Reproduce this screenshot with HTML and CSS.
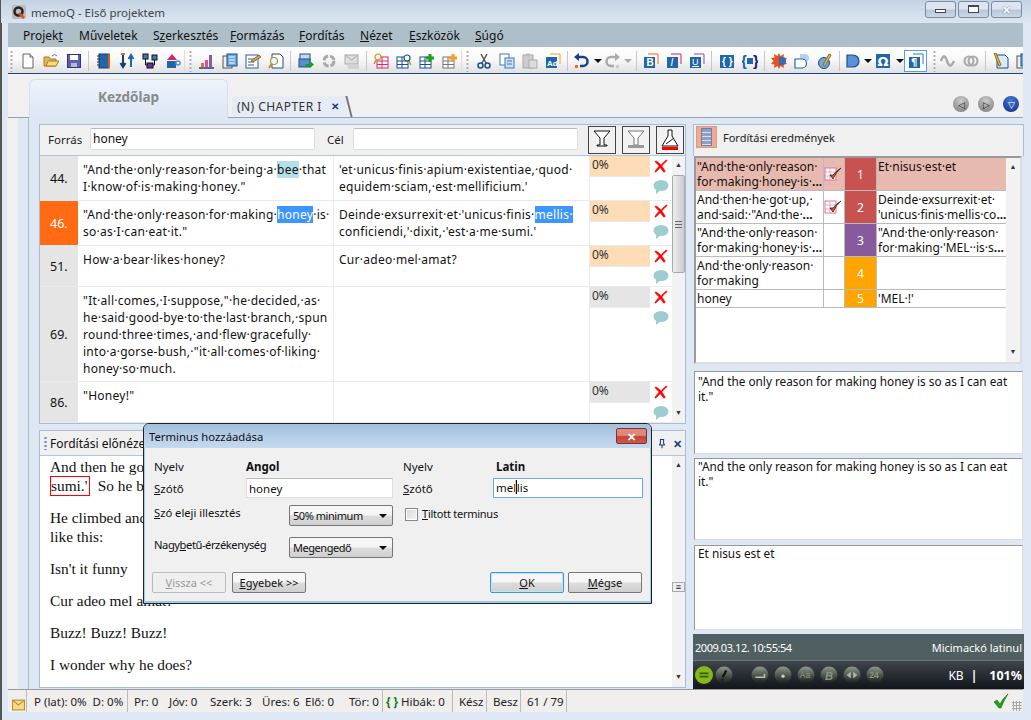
FILE: index.html
```html
<!DOCTYPE html>
<html lang="hu">
<head>
<meta charset="utf-8">
<title>memoQ - Első projektem</title>
<link rel="stylesheet" href="styles.css">
</head>
<body>
<svg class="defs" width="0" height="0">
  <defs>
    <linearGradient id="ringfill" x1="0" y1="0" x2="0" y2="1"><stop offset="0" stop-color="#8d988c"/><stop offset=".55" stop-color="#4a5248"/><stop offset="1" stop-color="#1a1e18"/></linearGradient>
    <symbol id="doc" viewBox="0 0 16 16"><path d="M3 1h7l3 3v11H3z" fill="#fff" stroke="#666"/><path d="M10 1v3h3" fill="#ddd" stroke="#666"/></symbol>
    <symbol id="open" viewBox="0 0 16 16"><path d="M1 13V4h5l1 2h6v7z" fill="#e8b850" stroke="#a87a20"/><path d="M3 13l2-5h11l-3 5z" fill="#fbdc85" stroke="#a87a20"/><path d="M9 3q3-3 5 0" fill="none" stroke="#5a7aa0"/></symbol>
    <symbol id="save" viewBox="0 0 16 16"><rect x="1.500" y="1.500" width="13" height="13" fill="#5a60b5" stroke="#2d3380"/><rect x="4" y="2" width="8" height="5" fill="#fff"/><rect x="5" y="10" width="6" height="4" fill="#bbb"/></symbol>
    <symbol id="book" viewBox="0 0 16 16"><rect x="3" y="1" width="10" height="14" fill="#1f67a8" stroke="#0d3f78"/><path d="M1 3h3M1 6h3M1 9h3M1 12h3" stroke="#333"/><path d="M12 1h2v14h-2" fill="#e05a1e"/></symbol>
    <symbol id="updown" viewBox="0 0 16 16"><path d="M4 2v11M1.500 10L4 14l2.500-4" fill="none" stroke="#0d3f78" stroke-width="2"/><path d="M12 14V3M9.500 6L12 2l2.500 4" fill="none" stroke="#1f67a8" stroke-width="2"/><path d="M2 1h4" stroke="#ef6b1f" stroke-width="2"/></symbol>
    <symbol id="tree" viewBox="0 0 16 16"><rect x="1" y="1" width="5" height="5" fill="#3a78c0" stroke="#111"/><rect x="10" y="2" width="5" height="5" fill="#3a78c0" stroke="#111"/><rect x="5" y="10" width="6" height="5" fill="#6a2ca0" stroke="#111"/><path d="M3.500 6v6H5M12.500 7v5H11" fill="none" stroke="#111"/></symbol>
    <symbol id="house" viewBox="0 0 16 16"><path d="M2 7l5-6 5 6z" fill="#d4246e"/><rect x="2" y="8" width="9" height="7" fill="#1f67a8"/><circle cx="13" cy="10" r="2" fill="none" stroke="#5a90c8" stroke-width="1.500"/></symbol>
    <symbol id="bars" viewBox="0 0 16 16"><rect x="2" y="10" width="3" height="4" fill="#ef6b1f"/><rect x="6" y="7" width="3" height="7" fill="#e0509a"/><rect x="10" y="2" width="3" height="12" fill="#8d5aa8"/><path d="M0 15h15" stroke="#1a3f80" stroke-width="1.500"/></symbol>
    <symbol id="pages" viewBox="0 0 16 16"><rect x="1" y="3" width="9" height="12" fill="#eee" stroke="#555"/><rect x="5" y="1" width="10" height="12" fill="#6fa6dc" stroke="#1a4f90"/><path d="M7 4h6M7 7h6M7 10h6" stroke="#fff"/></symbol>
    <symbol id="docpen" viewBox="0 0 16 16"><rect x="1" y="2" width="12" height="13" fill="#fff" stroke="#2c5f98"/><path d="M3 6h6M3 9h6M3 12h6" stroke="#2c5f98"/><path d="M6 8l8-6 2 2-8 5z" fill="#c8a850" stroke="#8a7030"/></symbol>
    <symbol id="docfind" viewBox="0 0 16 16"><path d="M4 1h8l3 3v11H4z" fill="#fff" stroke="#1a4f90"/><circle cx="6" cy="8" r="3.500" fill="#dff" stroke="#b89030" stroke-width="1.200"/><path d="M3.500 11L1 15" stroke="#b89030" stroke-width="2"/></symbol>
    <symbol id="print" viewBox="0 0 16 16"><rect x="2" y="1" width="10" height="6" fill="#c8d8ea" stroke="#1a4f90"/><rect x="1" y="6" width="11" height="8" fill="#5a90c8" stroke="#1a4f90"/><path d="M7 11h5V8l4 3.500L12 15v-2H7z" fill="#1ea01e"/></symbol>
    <symbol id="sync" viewBox="0 0 16 16"><circle cx="8" cy="8" r="5" fill="none" stroke="#aaa" stroke-width="3" stroke-dasharray="6 2"/><circle cx="8" cy="8" r="2" fill="#eee"/></symbol>
    <symbol id="mailg" viewBox="0 0 16 16"><rect x="1" y="2" width="13" height="9" fill="#ddd" stroke="#aaa"/><path d="M1 2l6.500 5L14 2" fill="none" stroke="#aaa"/><path d="M3 13h12M4 15h11" stroke="#bbb"/></symbol>
    <symbol id="gridp" viewBox="0 0 16 16"><rect x="4" y="4" width="11" height="11" fill="#fff" stroke="#e0246e"/><path d="M4 8h11M4 11.500h11M9 4v11" stroke="#e0246e"/><circle cx="5" cy="4" r="3" fill="#fff" stroke="#c89020" stroke-width="1.200"/><path d="M3 7l-2 4" stroke="#c89020" stroke-width="1.500"/></symbol>
    <symbol id="gridb" viewBox="0 0 16 16"><rect x="1" y="4" width="11" height="11" fill="#fff" stroke="#1a4f90"/><path d="M1 8h11M1 11.500h11M6 4v11" stroke="#1a4f90"/><circle cx="11" cy="5" r="3" fill="#fff" stroke="#1a4f90" stroke-width="1.200"/><path d="M13 8l2 4" stroke="#c89020" stroke-width="1.500"/></symbol>
    <symbol id="gridg" viewBox="0 0 16 16"><rect x="1" y="4" width="11" height="11" fill="#fff" stroke="#1a4f90"/><path d="M1 8h11M1 11.500h11M6 4v11" stroke="#1a4f90"/><path d="M11 1v8M7 5h8" stroke="#1ea01e" stroke-width="3"/></symbol>
    <symbol id="grido" viewBox="0 0 16 16"><rect x="1" y="4" width="11" height="11" fill="#fff" stroke="#777"/><path d="M1 8h11M1 11.500h11M6 4v11" stroke="#777"/><path d="M11 1v8M7 5h8" stroke="#f0a030" stroke-width="3"/></symbol>
    <symbol id="cut" viewBox="0 0 16 16"><path d="M5 1l5 9M11 1l-5 9" stroke="#555" stroke-width="1.500"/><circle cx="4.500" cy="12.500" r="2.500" fill="none" stroke="#1a4f90" stroke-width="1.500"/><circle cx="11.500" cy="12.500" r="2.500" fill="none" stroke="#1a4f90" stroke-width="1.500"/></symbol>
    <symbol id="copy" viewBox="0 0 16 16"><rect x="1" y="1" width="9" height="11" fill="#fff" stroke="#3a78c0"/><rect x="6" y="5" width="9" height="10" fill="#cfe0f4" stroke="#3a78c0"/><path d="M8 8h5M8 11h5" stroke="#3a78c0"/></symbol>
    <symbol id="paste" viewBox="0 0 16 16"><rect x="1" y="2" width="10" height="13" fill="#ccc" stroke="#aaa"/><rect x="4" y="0.500" width="4" height="3" fill="#bbb"/><rect x="7" y="7" width="8" height="8" fill="#ddd" stroke="#aaa"/></symbol>
    <symbol id="ad" viewBox="0 0 16 16"><rect x="1" y="4" width="11" height="11" fill="#1f67a8"/><path d="M5 1h10v10" fill="none" stroke="#f0a030"/><text x="2" y="13" font-size="8" font-weight="700" fill="#fff" font-family="Liberation Sans">Ad</text></symbol>
    <symbol id="undo" viewBox="0 0 16 16"><path d="M4 4h6a4 4 0 0 1 0 9H7" fill="none" stroke="#1a3f90" stroke-width="2.500"/><path d="M6 0L1 4l5 4z" fill="#1a3f90"/><rect x="2" y="12" width="3" height="3" fill="#ef6b1f"/></symbol>
    <symbol id="redo" viewBox="0 0 16 16"><path d="M12 4H6a4 4 0 0 0 0 9h3" fill="none" stroke="#aaa" stroke-width="2.500"/><path d="M10 0l5 4-5 4z" fill="#aaa"/><rect x="11" y="12" width="3" height="3" fill="#ccc"/></symbol>
    <symbol id="bold" viewBox="0 0 16 16"><rect x="1" y="4" width="11" height="11" fill="#1f67a8"/><path d="M5 1h10v10" fill="none" stroke="#ef6b1f"/><text x="3.500" y="13" font-size="10" font-weight="700" fill="#fff" font-family="Liberation Sans">B</text></symbol>
    <symbol id="ital" viewBox="0 0 16 16"><rect x="1" y="4" width="11" height="11" fill="#1f67a8"/><path d="M5 1h10v10" fill="none" stroke="#c0246e"/><text x="4.500" y="13" font-size="10" font-style="italic" fill="#fff" font-family="Liberation Sans">I</text></symbol>
    <symbol id="und" viewBox="0 0 16 16"><rect x="1" y="4" width="11" height="11" fill="#1f67a8"/><path d="M5 1h10v10" fill="none" stroke="#8d4aa8"/><text x="3" y="12" font-size="9" fill="#fff" font-family="Liberation Sans">U</text><path d="M3 13.500h7" stroke="#fff"/></symbol>
    <symbol id="brace" viewBox="0 0 16 16"><rect x="1" y="2" width="14" height="13" fill="#1f67a8"/><text x="3" y="12" font-size="10" font-weight="700" fill="#fff" font-family="Liberation Sans">{ }</text></symbol>
    <symbol id="bracesq" viewBox="0 0 16 16"><text x="-1" y="13" font-size="15" font-weight="700" fill="#1a5fa8" font-family="Liberation Sans">{</text><text x="11" y="13" font-size="15" font-weight="700" fill="#141a78" font-family="Liberation Sans">}</text><rect x="5" y="5" width="6" height="6" fill="#1f67a8"/></symbol>
    <symbol id="burst" viewBox="0 0 16 16"><path d="M8 0l1.500 3L13 1l-.5 3.500L16 5l-2.500 3L16 11l-3.500.500L13 15l-3.500-2L8 16l-1.500-3L3 15l.5-3.500L0 11l2.500-3L0 5l3.500-.5L3 1l3.500 2z" fill="#e8501e"/><path d="M8 4h3a4 4 0 0 1 0 8H8z" fill="#2c6fb8"/></symbol>
    <symbol id="dshape" viewBox="0 0 16 16"><path d="M6 1h5a4 4 0 0 1 4 4 4 4 0 0 1-4 4H6z" fill="#b8d0ea"/><path d="M1 6h7a4 4 0 0 1 0 9H1z" fill="#fff" stroke="#1f67a8" stroke-width="1.200"/></symbol>
    <symbol id="pencil" viewBox="0 0 16 16"><circle cx="7" cy="10" r="5.500" fill="#6fa6dc" stroke="#1a4f90"/><path d="M6 12L12 1l2 1-6 11z" fill="#e8b850" stroke="#8a6a20"/></symbol>
    <symbol id="dblue" viewBox="0 0 16 16"><path d="M2 2h6a6 6 0 0 1 0 12H2z" fill="#5a90d8" stroke="#1a4f90" stroke-width="1.200"/></symbol>
    <symbol id="omega" viewBox="0 0 16 16"><rect x="1" y="1" width="14" height="14" fill="#1f67a8"/><text x="2.500" y="13" font-size="13" font-weight="700" fill="#fff" font-family="DejaVu Sans">Ω</text></symbol>
    <symbol id="para" viewBox="0 0 16 16"><rect x="1" y="4" width="11" height="11" fill="#1f67a8"/><path d="M5 1h10v10" fill="none" stroke="#3a78c0"/><text x="3" y="13" font-size="10" font-weight="700" fill="#fff" font-family="DejaVu Sans">¶</text></symbol>
    <symbol id="wave" viewBox="0 0 16 16"><path d="M1 8q3-9 6 0t7 0" fill="none" stroke="#aaa" stroke-width="2.500"/></symbol>
    <symbol id="links" viewBox="0 0 16 16"><circle cx="6" cy="8" r="4.500" fill="none" stroke="#aaa" stroke-width="2.200"/><circle cx="10" cy="8" r="4.500" fill="none" stroke="#aaa" stroke-width="2.200"/></symbol>
    <symbol id="notepen" viewBox="0 0 16 16"><path d="M4 2h8l3 3v10H4z" fill="#dbe8f6" stroke="#1a4f90"/><path d="M1 0l2 0 5 12-2 1z" fill="#e8c040" stroke="#8a6a20"/></symbol>
    <symbol id="cross" viewBox="0 0 16 16"><path d="M2 2q5 3 6 5 2-3 6-6 1 0 1 1-4 3-6 6 2 3 4 6-1 1-2 1-2-3-4-5-3 3-5 5-1 0-1-1 3-4 5-6-3-3-5-5z" fill="#f00" stroke="#f00" stroke-width=".6"/></symbol>
    <symbol id="bubble" viewBox="0 0 16 16"><ellipse cx="8" cy="6.500" rx="7.500" ry="5.500" fill="#9ecdd0"/><path d="M3 10v5l5-4z" fill="#9ecdd0"/></symbol>
    <symbol id="tick" viewBox="0 0 20 16"><rect x="1" y="2" width="11" height="12" fill="#fff" stroke="#e0709a"/><path d="M1 6h11M1 10h11M6 2v12" stroke="#e8a0c0"/><path d="M6 9l3 4q3-7 8-11-5 3-8 7z" fill="#d85a10" stroke="#222" stroke-width=".8"/></symbol>
    <symbol id="ring" viewBox="0 0 16 16"><circle cx="8" cy="8" r="7.500" fill="url(#ringfill)"/></symbol>
  </defs>
</svg>

<div class="window">
  <header class="title">
    <svg class="app-ic" viewBox="0 0 14 14"><rect width="14" height="14" rx="2" fill="#bbb"/><circle cx="6.500" cy="6.500" r="4" fill="none" stroke="#222" stroke-width="2.500"/><path d="M7 8l5 5" stroke="#d52" stroke-width="2.500"/></svg>
    <span class="title-text">memoQ - Első projektem</span>
    <div class="caps">
      <button class="cap"><span class="cap-min"></span></button>
      <button class="cap"><span class="cap-max"></span></button>
      <button class="cap cap-x">✕</button>
    </div>
  </header>

  <nav class="menu">
    <span class="m1">Projek<u>t</u></span>
    <span class="m2">Műveletek</span>
    <span class="m3">S<u>z</u>erkesztés</span>
    <span class="m4"><u>F</u>ormázás</span>
    <span class="m5"><u>F</u>ordítás</span>
    <span class="m6"><u>N</u>ézet</span>
    <span class="m7"><u>E</u>szközök</span>
    <span class="m8"><u>S</u>úgó</span>
  </nav>

  <div class="toolbar">
    <i class="grip g-first"></i>
    <svg class="ic"><use href="#doc"/></svg><svg class="ic"><use href="#open"/></svg><svg class="ic"><use href="#save"/></svg>
    <i class="sep"></i>
    <svg class="ic"><use href="#book"/></svg><svg class="ic"><use href="#updown"/></svg><svg class="ic"><use href="#tree"/></svg><svg class="ic"><use href="#house"/></svg>
    <i class="grip"></i>
    <svg class="ic"><use href="#bars"/></svg><svg class="ic"><use href="#pages"/></svg><svg class="ic"><use href="#docpen"/></svg><svg class="ic"><use href="#docfind"/></svg>
    <i class="sep"></i>
    <svg class="ic"><use href="#print"/></svg><svg class="ic"><use href="#sync"/></svg><svg class="ic"><use href="#mailg"/></svg>
    <i class="sep s6"></i>
    <svg class="ic"><use href="#gridp"/></svg><svg class="ic"><use href="#gridb"/></svg><svg class="ic"><use href="#gridg"/></svg><svg class="ic"><use href="#grido"/></svg>
    <i class="grip"></i>
    <svg class="ic"><use href="#cut"/></svg><svg class="ic"><use href="#copy"/></svg><svg class="ic"><use href="#paste"/></svg><svg class="ic"><use href="#ad"/></svg>
    <i class="sep s6"></i>
    <svg class="ic ic22"><use href="#undo"/></svg><i class="drop"></i><svg class="ic ic19"><use href="#redo"/></svg><i class="drop drop-off"></i>
    <i class="sep s6"></i>
    <svg class="ic"><use href="#bold"/></svg><svg class="ic"><use href="#ital"/></svg><svg class="ic"><use href="#und"/></svg>
    <i class="sep"></i>
    <svg class="ic"><use href="#brace"/></svg><svg class="ic"><use href="#bracesq"/></svg>
    <i class="sep s6"></i>
    <svg class="ic"><use href="#burst"/></svg><svg class="ic"><use href="#dshape"/></svg><svg class="ic"><use href="#pencil"/></svg>
    <i class="sep"></i>
    <svg class="ic ic19"><use href="#dblue"/></svg><i class="drop drop-tight"></i><svg class="ic ic22"><use href="#omega"/></svg><i class="drop"></i>
    <span class="pressed"><svg class="ic ic-in"><use href="#para"/></svg></span>
    <i class="grip g-after"></i>
    <svg class="ic"><use href="#wave"/></svg><svg class="ic"><use href="#links"/></svg>
    <i class="sep"></i>
    <svg class="ic"><use href="#notepen"/></svg><svg class="ic"><use href="#pages"/></svg>
  </div>

  <div class="tabs">
    <div class="tab-home">Kezdőlap</div>
    <div class="tab-doc"><span>(N) CHAPTER I</span><b class="tab-x">✕</b><i class="tab-slash"></i></div>
    <div class="tab-nav">
      <span class="nav-btn">◁</span><span class="nav-btn">▷</span><span class="nav-btn nav-blue">▽</span>
    </div>
  </div>

  <div class="main">
    <div class="rail-a"></div>
    <div class="rail-b"></div>
    <div class="rail-c"></div>
    <div class="work">
      <section class="source">
        <div class="filter">
          <label class="f-src">Forrás</label>
          <input class="f-input" value="honey">
          <label class="f-tgt">Cél</label>
          <input class="f-input f-input2" value="">
          <button class="f-btn"><svg viewBox="0 0 26 26"><path d="M5 4h16l-6 7v7h3v1h-10v-1h3v-7z" fill="#fff" stroke="#111"/></svg></button>
          <button class="f-btn"><svg viewBox="0 0 26 26"><path d="M5 4h16l-6 7v7h-4v-7z" fill="#fff" stroke="#777"/><rect x="5" y="18" width="16" height="3" fill="#999"/></svg></button>
          <button class="f-btn"><svg viewBox="0 0 26 26"><path d="M11 3v6L5 19h16L15 9V3z" fill="#fff" stroke="#111"/><path d="M9 17l8-6" stroke="#111"/><rect x="5" y="20" width="16" height="3" fill="#f00"/></svg></button>
        </div>
        <div class="grid-wrap">
          <div class="rows">
            <div class="row r45">
              <div class="num">44.</div>
              <div class="seg">"And·the·only·reason·for·being·a·<mark class="hl-b">bee</mark>·that I·know·of·is·making·honey."</div>
              <div class="seg">'et·unicus·finis·apium·existentiae,·quod· equidem·sciam,·est·mellificium.'</div>
              <div class="pct"><span class="pct-v peach">0%</span><svg class="xm"><use href="#cross"/></svg><span class="pct-e"></span><svg class="bub"><use href="#bubble"/></svg></div>
            </div>
            <div class="row r45">
              <div class="num num-on">46.</div>
              <div class="seg">"And·the·only·reason·for·making·<mark class="hl-s">honey</mark>·is· so·as·I·can·eat·it."</div>
              <div class="seg">Deinde·exsurrexit·et·'unicus·finis·<mark class="hl-s">mellis·</mark> conficiendi,'·dixit,·'est·a·me·sumi.'</div>
              <div class="pct"><span class="pct-v peach">0%</span><svg class="xm"><use href="#cross"/></svg><span class="pct-e"></span><svg class="bub"><use href="#bubble"/></svg></div>
            </div>
            <div class="row r41">
              <div class="num">51.</div>
              <div class="seg">How·a·bear·likes·honey?</div>
              <div class="seg">Cur·adeo·mel·amat?</div>
              <div class="pct"><span class="pct-v peach">0%</span><svg class="xm"><use href="#cross"/></svg><span class="pct-e"></span><svg class="bub"><use href="#bubble"/></svg></div>
            </div>
            <div class="row r95">
              <div class="num">69.</div>
              <div class="seg">"It·all·comes,·I·suppose,"·he·decided,·as· he·said·good-bye·to·the·last·branch,·spun round·three·times,·and·flew·gracefully· into·a·gorse-bush,·"it·all·comes·of·liking· honey·so·much.</div>
              <div class="seg"></div>
              <div class="pct"><span class="pct-v grey">0%</span><svg class="xm"><use href="#cross"/></svg><span class="pct-e"></span><svg class="bub"><use href="#bubble"/></svg></div>
            </div>
            <div class="row r41">
              <div class="num">86.</div>
              <div class="seg">"Honey!"</div>
              <div class="seg"></div>
              <div class="pct"><span class="pct-v grey">0%</span><svg class="xm"><use href="#cross"/></svg><span class="pct-e"></span><svg class="bub"><use href="#bubble"/></svg></div>
            </div>
          </div>
          <div class="scroll">
            <span class="sc-arrow">▲</span>
            <span class="sc-thumb"><i></i></span>
            <span class="sc-space"></span>
            <span class="sc-arrow sc-down">▼</span>
          </div>
        </div>
      </section>

      <section class="preview">
        <div class="pv-head">
          <i class="pv-grip"></i><span>Fordítási előnézet</span>
          <span class="pv-tools"><svg viewBox="0 0 10 12" class="pin"><path d="M3 1h4v5l1 1v1H2V7l1-1zM5 8v4" fill="none" stroke="#1a3f80" stroke-width="1.300"/></svg><b>✕</b></span>
        </div>
        <div class="pv-body">
          <div class="pv-text">
            <p class="pv-first">And then he go</p>
            <p><span class="red">sumi.'</span> So he be</p>
            <p class="pv-tight">He climbed and</p>
            <p>like this:</p>
            <p>Isn't it funny</p>
            <p>Cur adeo mel amat?</p>
            <p>Buzz! Buzz! Buzz!</p>
            <p>I wonder why he does?</p>
          </div>
          <div class="pv-scroll"><span class="sc-arrow">▲</span><span class="sc-grip">≡</span><span class="sc-arrow">▼</span></div>
        </div>
      </section>
    </div>

    <aside class="right">
      <div class="res-head">
        <span class="res-ic"><i></i></span>
        <span class="res-title">Fordítási eredmények</span>
      </div>
      <div class="res-table">
        <div class="res-rows">
          <div class="res-row rr33 rr-on">
            <div class="res-a">"And·the·only·reason· for·making·honey·is·<b>...</b></div>
            <div class="res-i"><svg class="tick"><use href="#tick"/></svg></div>
            <div class="res-n red-n">1</div>
            <div class="res-b">Et·nisus·est·et</div>
          </div>
          <div class="res-row rr33">
            <div class="res-a">And·then·he·got·up,· and·said:·"And·the·<b>...</b></div>
            <div class="res-i"><svg class="tick"><use href="#tick"/></svg></div>
            <div class="res-n red-n">2</div>
            <div class="res-b">Deinde·exsurrexit·et· 'unicus·finis·mellis·co<b>...</b></div>
          </div>
          <div class="res-row rr33">
            <div class="res-a">"And·the·only·reason· for·making·honey·is·<b>...</b></div>
            <div class="res-i"></div>
            <div class="res-n pur-n">3</div>
            <div class="res-b">"And·the·only·reason· for·making·'MEL··is·s<b>...</b></div>
          </div>
          <div class="res-row rr33">
            <div class="res-a">And·the·only·reason· for·making</div>
            <div class="res-i"></div>
            <div class="res-n org-n">4</div>
            <div class="res-b"></div>
          </div>
          <div class="res-row rr18">
            <div class="res-a">honey</div>
            <div class="res-i"></div>
            <div class="res-n org-n">5</div>
            <div class="res-b">'MEL·!'</div>
          </div>
        </div>
        <div class="res-scroll"><span class="sc-arrow">▲</span><span class="sc-arrow">▼</span></div>
      </div>
      <div class="box box-1">"And the only reason for making honey is so as I can eat it."</div>
      <div class="box box-2">"And the only reason for making honey is so as I can eat it."</div>
      <div class="box box-3">Et nisus est et</div>
      <div class="info">
        <span class="info-date">2009.03.12. 10:55:54</span><span>Micimackó latinul</span>
      </div>
      <div class="flags">
        <svg class="dot dot-green" viewBox="0 0 16 16"><circle cx="8" cy="8" r="8" fill="#86b818"/><path d="M4 6.500h8M4 9.500h8" stroke="#3a5a08" stroke-width="1.500"/></svg>
        <svg class="dot d-1" viewBox="0 0 16 16"><use href="#ring"/><path d="M10 4l-3 6M6 12h1" stroke="#111" stroke-width="2"/></svg>
        <svg class="dot d-2" viewBox="0 0 16 16"><use href="#ring"/><path d="M4 10h8V7" fill="none" stroke="#b8c0b8" stroke-width="1.500"/></svg>
        <svg class="dot" viewBox="0 0 16 16"><use href="#ring"/><circle cx="8" cy="9" r="1.500" fill="#c8d0c8"/></svg>
        <svg class="dot" viewBox="0 0 16 16"><use href="#ring"/><text x="2.500" y="11" font-size="7.500" fill="#8a968a" font-family="Liberation Sans">Aa</text></svg>
        <svg class="dot" viewBox="0 0 16 16"><use href="#ring"/><text x="4.500" y="12" font-size="10" font-style="italic" font-weight="700" fill="#8a968a" font-family="Liberation Sans">B</text></svg>
        <svg class="dot" viewBox="0 0 16 16"><use href="#ring"/><path d="M7 5v6L3 8zM9 5v6l4-3z" fill="#a8b0a8"/></svg>
        <svg class="dot" viewBox="0 0 16 16"><use href="#ring"/><text x="3" y="11" font-size="7.500" font-weight="700" fill="#8a968a" font-family="Liberation Sans">24</text></svg>
        <span class="kb">KB</span><span class="kb-bar">|</span><b class="zoom">101%</b>
      </div>
    </aside>
  </div>

  <footer class="status">
    <span class="st st-mail"><svg viewBox="0 0 12 10"><rect x=".5" y=".5" width="11" height="9" fill="#fbd98a" stroke="#b8902a"/><path d="M.5.5L6 5l5.500-4.500" fill="none" stroke="#b8902a"/></svg></span>
    <span class="st st-p">P (lat): 0%&nbsp;&nbsp;D: 0%</span>
    <span class="st st-c"><span class="c1">Pr: 0</span><span class="c2">Jóv: 0</span><span class="c3">Szerk: 3</span><span class="c4">Üres: 6</span><span class="c5">Elő: 0</span><span>Tör: 0</span></span>
    <span class="st st-e"><b class="br">{ }</b> Hibák: 0</span>
    <span class="st st-k">Kész</span>
    <span class="st st-b">Besz</span>
    <span class="st st-n">61 / 79</span>
    <span class="st-right">
      <svg class="ok" viewBox="0 0 16 16"><path d="M1 9l3-2 3 4q3-6 8-10-4 6-7 14h-2z" fill="#1ea01e" stroke="#0a5a0a" stroke-width=".5"/></svg>
      <i class="st-grip"></i>
    </span>
  </footer>

  <div class="dialog">
    <div class="dlg-title"><span>Terminus hozzáadása</span><button class="dlg-x">✕</button></div>
    <div class="dlg-body">
      <div class="dlg-grid">
        <div class="dlg-col">
          <div class="d-row d-r1"><span class="d-l">Nyelv</span><b>Angol</b></div>
          <div class="d-row d-r2"><span class="d-l"><u>S</u>zótő</span><input class="d-in" value="honey"></div>
          <div class="d-row d-r3"><span class="d-l d-wide"><u>S</u>zó eleji illesztés</span><span class="sel">50% minimum</span></div>
          <div class="d-row d-r4"><span class="d-l d-wide d-narrow">Nagy<u>b</u>etű-érzékenység</span><span class="sel">Megengedő</span></div>
        </div>
        <div class="dlg-col">
          <div class="d-row d-r1"><span class="d-l2">Nyelv</span><b>Latin</b></div>
          <div class="d-row d-r2"><span class="d-l2"><u>S</u>zótő</span><span class="d-in d-focus">mel<span class="caret"></span>lis</span></div>
          <div class="d-row d-r3"><span class="chk"></span><span class="chk-l"><u>T</u>iltott terminus</span></div>
        </div>
      </div>
      <div class="dlg-btns">
        <button class="btn btn-off"><u>V</u>issza &lt;&lt;</button>
        <button class="btn"><u>E</u>gyebek &gt;&gt;</button>
        <span class="btn-gap"></span>
        <button class="btn btn-def"><u>O</u>K</button>
        <button class="btn"><u>M</u>égse</button>
      </div>
    </div>
  </div>
</div>
</body>
</html>
```
FILE: styles.css
```css
* { box-sizing: border-box; }
html, body { margin: 0; padding: 0; }
body {
  width: 1031px; height: 720px; overflow: hidden;
  background: #dde8f4;
  font: 12px/17px "Noto Sans", "Open Sans", sans-serif;
  color: #111;
}
.defs { position: absolute; }
.window {
  position: relative; width: 1031px; height: 720px; display: flex; flex-direction: column;
  background: linear-gradient(90deg, #555 2px, #dde8f4 2px);
}
button { font: inherit; padding: 0; }
mark { color: inherit; background: none; }

/* title */
.title {
  height: 23px; flex: none; display: flex; align-items: center;
  padding-left: 11px; border-left: 1px solid #555;
  background: linear-gradient(#c4d3e3, #dbe6f2);
}
.app-ic { width: 14px; height: 14px; }
.title-text { margin-left: 5px; padding-top: 2px; font-size: 11.500px; color: #444; }
.caps { margin-left: auto; display: flex; gap: 2px; padding-right: 9px; margin-top: -5px; }
.cap {
  width: 31px; height: 17px; border: 1px solid #7b8ca0; border-radius: 3px;
  background: linear-gradient(#dde6f0 45%, #b8c8d8 55%, #cbd8e6);
  display: flex; align-items: center; justify-content: center;
  font-size: 11px; font-weight: 700; color: #445; line-height: 1;
}
.cap-min { width: 11px; height: 4px; border: 1px solid #445; background: #fff; margin-top: 4px; }
.cap-max { width: 11px; height: 8px; border: 1px solid #445; border-top-width: 2px; background: #fff; }
.cap-x { color: #fff; text-shadow: 0 0 1px #334; }

/* menu */
.menu {
  height: 24px; flex: none; margin: 0 8px; background: #aebfca;
  display: flex; align-items: center; padding-left: 15px; color: #111;
}
.menu span { flex: none; }
.m1 { width: 56px; } .m2 { width: 74px; } .m3 { width: 77px; } .m4 { width: 69px; }
.m5 { width: 61px; } .m6 { width: 49px; } .m7 { width: 66px; }

/* toolbar */
.toolbar {
  height: 27px; flex: none; margin: 0 8px; padding-top: 1px; overflow: hidden;
  display: flex; align-items: center;
  background: linear-gradient(#fff, #f7f7f7 50%, #e2e2e2 96%);
  border-bottom: 1px solid #1d4a86;
}
.ic { width: 16px; height: 16px; flex: none; margin: 0 3.500px; }
.ic22 { margin: 0 3px; }
.ic19 { margin: 0 1.500px; }
.sep { width: 7px; height: 20px; flex: none; position: relative; }
.sep::after { content: ""; position: absolute; left: 3px; top: 0; bottom: 0; width: 1px; background: #c8c8c8; }
.s6 { width: 6px; }
.grip { width: 11px; height: 22px; flex: none; border-left: 1px solid #ddd; margin-left: 0; background: radial-gradient(circle, #aaa 1px, transparent 1.200px) 4px 0 / 3px 4px repeat-y; }
.g-first { width: 8px; border: 0; background-position: 2px 0; }
.g-after { margin-left: 1px; width: 8px; border: 0; background-position: 5px 0; }
.drop { width: 11px; height: 16px; flex: none; position: relative; }
.drop::after { content: ""; position: absolute; left: 2px; top: 6px; border: 4px solid transparent; border-top-color: #111; }
.drop-off::after { border-top-color: #aaa; }
.drop-tight { width: 10px; margin-right: 0; }
.pressed { width: 23px; height: 22px; flex: none; border: 1px solid #5a9ce8; background: #fdfdfd; display: flex; align-items: center; justify-content: center; margin-left: -1px; }
.ic-in { margin: 0; }

/* tabs */
.tabs {
  height: 44px; flex: none; margin: 0 8px; padding-left: 21px; background: #f0f0f0;
  border-bottom: 1px solid #8ba3bd; display: flex; align-items: flex-end; position: relative;
}
.tab-home {
  width: 199px; height: 39px; margin-bottom: -1px; padding: 7px 0 0 68px;
  border: 1px solid #d4dfee; border-bottom: 0; border-radius: 6px 6px 0 0;
  background: linear-gradient(#eef3fb, #dde6f5);
  font: 700 13.500px/20px "Noto Sans", sans-serif; color: #8a8a8a;
}
.tab-doc {
  width: 115px; height: 20px; margin: 0 0 1px 4px; padding-left: 5px; display: flex; align-items: center;
  background: #e6ebf4; position: relative; color: #333; white-space: nowrap; font-size: 12px; letter-spacing: .45px;
}
.tab-x { margin-left: 9px; font-size: 10px; color: #1d3a80; }
.tab-slash { position: absolute; right: -3px; top: 0; width: 2px; height: 21px; background: #777; transform: skewX(14deg); }
.tab-nav { margin-left: auto; display: flex; gap: 9px; padding-right: 4px; padding-bottom: 5px; }
.nav-btn {
  width: 16px; height: 16px; border-radius: 50%; background: radial-gradient(circle at 50% 30%, #ccc, #777);
  display: flex; align-items: center; justify-content: center; font-size: 9px; line-height: 1; color: #111;
}
.nav-blue { background: radial-gradient(circle at 50% 30%, #4a78d8, #0a2a80); color: #fff; }

/* main */
.main { flex: none; height: 571px; display: flex; }
.rail-a { width: 7px; border-left: 2px solid #555; background: #dde8f4; }
.rail-b { width: 11px; background: #f0f0f0; }
.rail-c { width: 11px; background: #e0e8f5; border-right: 1px solid #a8bad0; margin-right: 10px; }
.work { width: 647px; margin-top: 6px; display: flex; flex-direction: column; gap: 6px; }
.right { width: 331px; margin-left: 7px; margin-top: 6px; display: flex; flex-direction: column; }

/* source */
.source { height: 300px; flex: none; border: 1px solid #a9bcd2; background: #fff; display: flex; flex-direction: column; overflow: hidden; }
.filter { height: 31px; flex: none; background: #f0f0f0; display: flex; align-items: center; padding-left: 8px; border-bottom: 1px solid #b5c4d6; font-size: 11.500px; }
.f-src { width: 42px; flex: none; color: #222; margin-bottom: 2px; }
.f-tgt { width: 26px; flex: none; margin-left: 12px; color: #222; margin-bottom: 2px; }
.f-input { width: 225px; height: 22px; flex: none; margin-bottom: 3px; border: 1px solid #ddd; border-top-color: #bbb; border-radius: 2px; padding: 0 2px; font: 12px "Noto Sans", sans-serif; background: #fff; color: #111; }
.f-input2 { margin-right: 10px; }
.f-btn { width: 28px; height: 28px; margin-right: 6px; flex: none; border: 1px solid #444; background: #f2f2f2; display: flex; align-items: center; justify-content: center; }
.f-btn svg { width: 26px; height: 26px; }
.grid-wrap { flex: 1; display: flex; min-height: 0; }
.rows { width: 632px; flex: none; }
.row { display: grid; grid-template-columns: 38px 256px 256px 82px; border-bottom: 1px solid #eaeaea; }
.r45 { height: 45px; } .r41 { height: 41px; } .r95 { height: 95px; }
.num { background: #e5e5e5; display: flex; align-items: center; padding-left: 10px; font-size: 12.500px; }
.num-on { background: #ff6a13; color: #fff; }
.seg { padding: 5px 0 0 5px; border-right: 1px solid #eaeaea; letter-spacing: .27px; }
.hl-b { background: #b5e0ea; }
.hl-s { background: #3d95ff; color: #fff; }
.pct { display: grid; grid-template-columns: 60px 22px; grid-template-rows: 20px 1fr; }
.pct-v { padding-left: 2px; line-height: 18px; color: #333; }
.peach { background: #fddcb8; }
.grey { background: #e5e5e5; }
.xm { width: 14px; height: 14px; justify-self: center; align-self: center; }
.pct-e { border-top: 1px solid #eaeaea; }
.bub { width: 16px; height: 16px; justify-self: center; margin-top: 3px; }
.scroll { width: 13px; flex: none; background: #f2f2f2; display: flex; flex-direction: column; align-items: stretch; }
.sc-arrow { height: 19px; flex: none; text-align: center; font-size: 7px; line-height: 17px; color: #333; }
.sc-thumb { height: 98px; flex: none; border: 1px solid #aaa; border-radius: 2px; background: linear-gradient(90deg, #eee, #ccc); display: flex; align-items: center; justify-content: center; }
.sc-thumb i { width: 7px; height: 7px; border-top: 1px solid #666; border-bottom: 1px solid #666; background: linear-gradient(#666, #666) center / 100% 1px no-repeat; }
.sc-space { flex: 1; }

/* preview */
.preview { height: 258px; flex: none; border: 1px solid #a9bcd2; background: #fff; display: flex; flex-direction: column; overflow: hidden; }
.pv-head { height: 25px; flex: none; background: #f0f0f0; border-bottom: 1px solid #b5c4d6; display: flex; align-items: center; padding-left: 4px; }
.pv-grip { width: 3px; height: 14px; margin-right: 3px; background: radial-gradient(circle, #5a90c8 1px, transparent 1.300px) 0 0 / 3px 4px; }
.pv-tools { margin-left: auto; display: flex; align-items: center; gap: 7px; padding-right: 3px; color: #1a3f80; font-size: 11px; }
.pv-tools b { font-size: 11px; }
.pin { width: 8px; height: 11px; }
.pv-body { flex: 1; display: flex; min-height: 0; }
.pv-text { flex: 1; padding: 1px 0 0 10px; font: 15.333px/20px "Liberation Serif", serif; color: #111; min-width: 0; white-space: nowrap; overflow: hidden; }
.pv-text p { margin: 0 0 12px; }
.pv-text p.pv-tight { margin-bottom: -1px; }
.pv-text p.pv-first { margin-bottom: -1px; }
.red { border: 1px solid #f00; display: inline-block; line-height: 18px; width: 40px; margin-right: 4px; }
.pv-scroll { width: 13px; flex: none; background: #f2f2f2; display: flex; flex-direction: column; justify-content: space-between; align-items: stretch; }
.pv-scroll .sc-grip { width: 13px; height: 10px; border: 1px solid #aaa; background: #eee; line-height: 8px; font-size: 9px; text-align: center; margin-top: 30px; }

/* right */
.res-head { height: 32px; flex: none; background: #f0f0f0; border: 1px solid #a9bcd2; border-bottom: 0; display: flex; align-items: flex-start; padding: 1px 0 0 2px; gap: 6px; font-size: 11px; color: #222; }
.res-title { padding-top: 3px; }
.res-ic { width: 21px; height: 22px; background: #f5a88a; border: 1px solid #c8a090; padding: 1px 4px; }
.res-ic i { display: block; height: 100%; background: repeating-linear-gradient(#8aa0c8 0 3px, #dde 3px 4px); border: 1px solid #6a80a8; }
.res-table { height: 208px; flex: none; display: flex; border: 2px solid #999; border-right: 2px solid #ddd; border-bottom: 2px solid #ddd; background: #fff; margin: 0 2px 0 1px; }
.res-rows { width: 310px; flex: none; }
.res-row { display: grid; grid-template-columns: 128px 21px 32px 1fr; border-bottom: 1px solid #bbb; font-size: 12px; line-height: 15px; }
.rr33 { height: 33px; } .rr18 { height: 18px; }
.rr-on { background: #e8b9ae; }
.res-a, .res-b { padding: 1px 0 0 1px; overflow: hidden; }
.res-a { border-right: 1px solid #bbb; }
.res-i { border-right: 1px solid #bbb; display: flex; align-items: center; justify-content: center; }
.tick { width: 20px; height: 16px; }
.res-n { color: #fff; display: flex; align-items: center; justify-content: center; border-right: 1px solid #bbb; font-size: 12px; }
.red-n { background: #c85250; } .pur-n { background: #875a9d; } .org-n { background: #ffa500; }
.res-scroll { flex: 1; background: #f2f2f2; display: flex; flex-direction: column; justify-content: space-between; }
.box { flex: none; border: 1px solid #999; border-right-color: #ddd; border-bottom-color: #ddd; background: #fff; margin: 0 1px; padding: 2px 3px; font-size: 11.800px; line-height: 15px; color: #111; }
.box-1 { height: 83px; margin-top: 7px; }
.box-2 { height: 82px; margin-top: 4px; padding-top: 0; }
.box-3 { height: 85px; margin-top: 5px; padding-top: 0; }
.info { height: 26px; flex: none; margin-top: 4px; background: #4f5f62; color: #fff; display: flex; justify-content: space-between; align-items: center; padding: 0 2px; font-size: 11px; }
.info-date { letter-spacing: -.45px; }
.flags { height: 29px; flex: none; border-top: 1px solid #6a7678; background: linear-gradient(#3f454a, #11151c); display: flex; align-items: center; padding-left: 1px; color: #fff; }
.dot { width: 18px; height: 18px; margin-right: 5px; flex: none; }
.dot-green { margin-right: 2px; margin-left: 1px; }
.d-1 { margin-right: 18px; }
.kb { margin-left: auto; font-size: 12px; }
.kb-bar { margin: 0 12px 0 7px; font-weight: 700; }
.zoom { font-size: 12.500px; padding-right: 2px; }

/* status */
.status { height: 23px; flex: none; margin: 0 8px; background: #f1eeee; border-top: 1px solid #999; display: flex; align-items: stretch; font-size: 11.500px; line-height: 24px; color: #222; white-space: nowrap; }
.st { border-right: 1px solid #bbb; flex: none; overflow: hidden; }
.st-mail { width: 19px; padding: 9px 0 0 4px; display: flex; }
.st-mail svg { width: 13px; height: 12px; }
.st-p { width: 101px; padding-left: 7px; }
.st-c { width: 255px; padding-left: 6px; display: flex; }
.c1 { width: 35px; } .c2 { width: 41px; } .c3 { width: 52px; } .c4 { width: 43px; } .c5 { width: 44px; }
.st-e { width: 70px; padding-left: 3px; }
.br { color: #0a7a0a; }
.st-k { width: 34px; padding-left: 6px; }
.st-b { width: 34px; padding-left: 6px; }
.st-n { width: 46px; padding-left: 6px; }
.st-right { margin-left: auto; display: flex; align-items: flex-end; padding-right: 1px; padding-bottom: 1px; }
.ok { width: 16px; height: 16px; margin-bottom: 2px; }
.st-grip { width: 10px; height: 10px; margin-left: 3px; background: radial-gradient(circle, #aaa 1px, transparent 1.200px) 0 0 / 3px 3px; }

/* dialog */
.dialog {
  position: absolute; left: 143px; top: 423px; width: 509px; height: 181px;
  border: 1px solid #222; border-radius: 6px 6px 0 0; background: #f0f0f0; overflow: hidden;
  box-shadow: inset 0 -1px 0 1px #9ccbe8; display: flex; flex-direction: column;
}
.dlg-title {
  height: 24px; flex: none; display: flex; align-items: center; padding: 0 4px 0 5px; justify-content: space-between;
  background: linear-gradient(#a4c0dd, #c5daf0); color: #111; font-size: 11.300px;
}
.dlg-x { width: 31px; height: 16px; align-self: flex-start; margin-top: 4px; border: 1px solid #7a3530; border-radius: 2px; background: linear-gradient(#e0887a 45%, #c0443a 55%, #d05a4a); color: #fff; font-size: 11px; font-weight: 700; line-height: 1; }
.dlg-body { flex: 1; display: flex; flex-direction: column; padding: 0 9px 10px 8px; font-size: 11.500px; }
.dlg-grid { display: grid; grid-template-columns: 239px 240px; column-gap: 10px; margin-left: 2px; }
.dlg-col { display: flex; flex-direction: column; }
.d-row { display: flex; align-items: center; }
.d-r1 { height: 30px; padding-top: 7px; }
.d-r2 { height: 20px; }
.d-r3 { height: 21px; margin-top: 7px; }
.d-r4 { height: 21px; margin-top: 11px; }
.d-l { width: 92px; flex: none; }
.d-l2 { width: 93px; flex: none; }
.d-wide { width: 135px; padding-bottom: 6px; white-space: nowrap; font-size: 11.200px; }
.d-narrow { letter-spacing: -.45px; }
.d-in { width: 147px; height: 20px; flex: none; border: 1px solid #ddd; border-top-color: #bbb; background: #fff; padding: 0 2px; font: 11.500px/18px "Noto Sans", sans-serif; color: #111; display: block; }
.d-focus { width: 150px; margin-left: -3px; border-color: #6fa8dc; }
.caret { display: inline-block; width: 1px; height: 14px; background: #111; vertical-align: -2px; margin: 0 0 0 -0.500px; box-shadow: -1px 0 0 #e8c060; }
.sel {
  width: 104px; height: 21px; flex: none; border: 1px solid #777; border-radius: 2px; padding-left: 3px;
  background: linear-gradient(#f6f6f6 45%, #dcdcdc 55%, #cfcfcf); line-height: 19px; position: relative; font-size: 11px; letter-spacing: -.45px;
}
.sel::after { content: ""; position: absolute; right: 5px; top: 8px; border: 4px solid transparent; border-top-color: #111; }
.chk { width: 13px; height: 13px; margin: 0 0 3px 2px; border: 1px solid #888; background: linear-gradient(135deg, #d8d8d8, #f5f5f5); flex: none; box-shadow: inset 0 0 0 1px #fff; }
.chk-l { margin-left: 4px; padding-bottom: 5px; font-size: 11px; letter-spacing: -.25px; }
.dlg-btns { display: flex; gap: 6px; margin-top: auto; }
.btn { width: 74px; height: 21px; border: 1px solid #777; border-radius: 2px; background: linear-gradient(#f6f6f6 45%, #dcdcdc 55%, #cfcfcf); color: #111; font-size: 11px; line-height: 18px; }
.btn-off { background: #efefef; border-color: #bbb; color: #999; }
.btn-gap { width: 172px; }
.btn-def { border-color: #3a9ad8; box-shadow: inset 0 0 0 1px #bfe6f8; margin-right: -2px; }
```
